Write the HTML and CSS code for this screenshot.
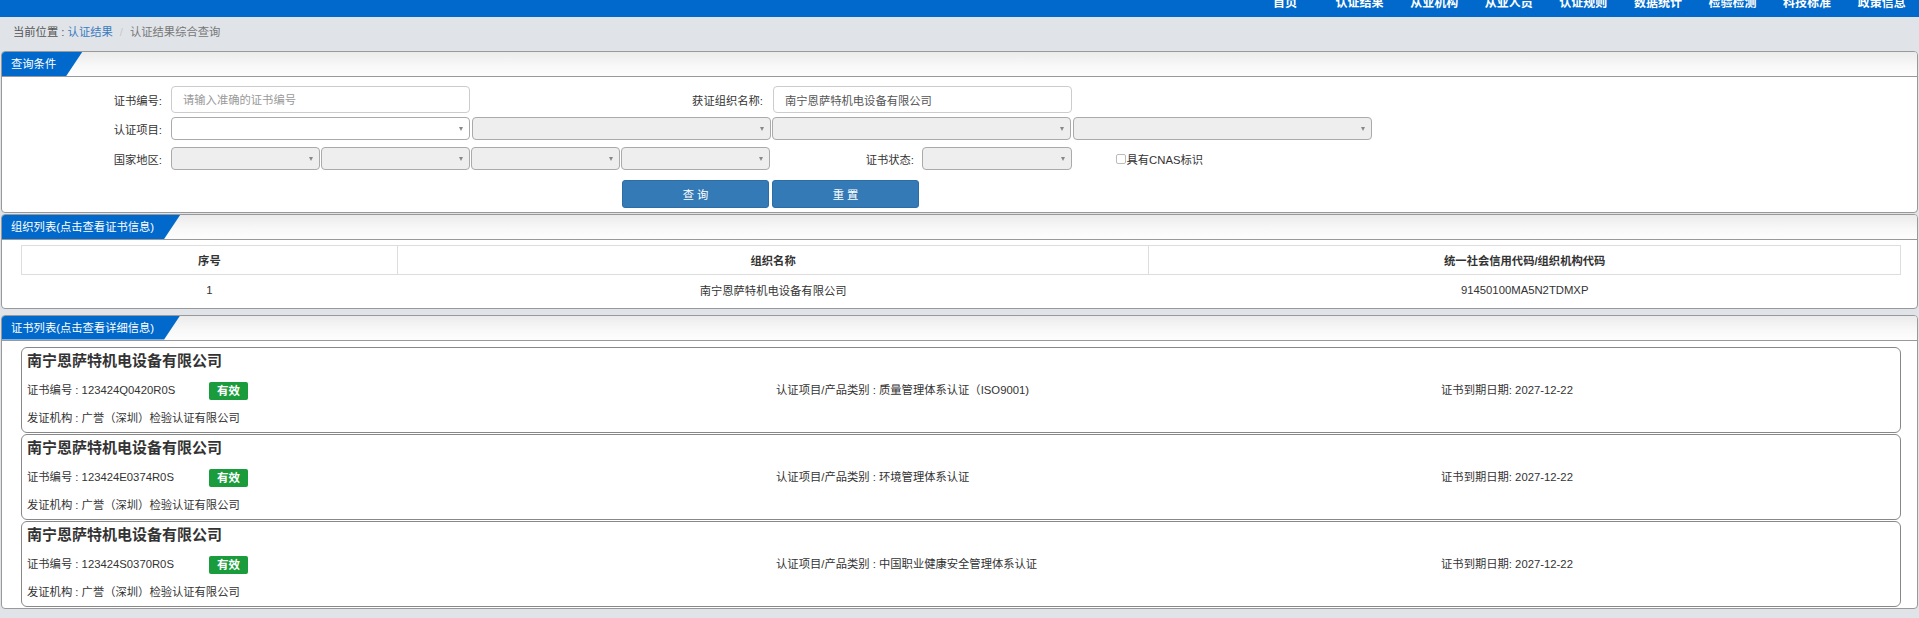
FILE: index.html
```html
<!DOCTYPE html>
<html lang="zh-CN">
<head>
<meta charset="utf-8">
<title>认证结果综合查询</title>
<link rel="stylesheet" href="styles.css">
</head>
<body>
<div class="topnav">
  <ul class="nav-list">
    <li>首页</li>
    <li>认证结果</li>
    <li>从业机构</li>
    <li>从业人员</li>
    <li>认证规则</li>
    <li>数据统计</li>
    <li>检验检测</li>
    <li>科技标准</li>
    <li>政策信息</li>
  </ul>
</div>

<div class="crumb">当前位置 : <a class="crumb-link">认证结果</a><span class="sep">/</span><span class="crumb-cur">认证结果综合查询</span></div>

<div class="panel panel-query">
  <div class="panel-head"><span class="tab">查询条件</span></div>
  <div class="query-body">
    <div class="frow">
      <label class="lbl">证书编号:</label>
      <input class="input" type="text" placeholder="请输入准确的证书编号">
      <label class="lbl lbl2">获证组织名称:</label>
      <input class="input" type="text" value="南宁恩萨特机电设备有限公司">
    </div>
    <div class="frow r2">
      <label class="lbl">认证项目:</label>
      <div class="sel w white"></div>
      <div class="sel w"></div>
      <div class="sel w"></div>
      <div class="sel w"></div>
    </div>
    <div class="frow r3">
      <label class="lbl">国家地区:</label>
      <div class="sel h"></div>
      <div class="sel h"></div>
      <div class="sel h"></div>
      <div class="sel h"></div>
      <label class="lbl lbl3">证书状态:</label>
      <div class="sel s"></div>
      <label class="chk"><span class="box"></span>具有CNAS标识</label>
    </div>
    <div class="frow btns">
      <button class="btn">查 询</button>
      <button class="btn">重 置</button>
    </div>
  </div>
</div>

<div class="panel panel-org">
  <div class="panel-head"><span class="tab">组织列表(点击查看证书信息)</span></div>
  <table class="org-table">
    <colgroup><col class="c1"><col class="c2"><col class="c3"></colgroup>
    <thead>
      <tr><th>序号</th><th>组织名称</th><th>统一社会信用代码/组织机构代码</th></tr>
    </thead>
    <tbody>
      <tr><td>1</td><td>南宁恩萨特机电设备有限公司</td><td>91450100MA5N2TDMXP</td></tr>
    </tbody>
  </table>
</div>

<div class="panel panel-cert">
  <div class="panel-head"><span class="tab">证书列表(点击查看详细信息)</span></div>
  <div class="cards">
    <div class="card">
      <div class="card-title">南宁恩萨特机电设备有限公司</div>
      <div class="card-row">
        <div><span class="cert-no">证书编号 : 123424Q0420R0S</span><span class="badge">有效</span></div>
        <div>认证项目/产品类别 : 质量管理体系认证（ISO9001)</div>
        <div>证书到期日期: 2027-12-22</div>
      </div>
      <div class="card-line">发证机构 : 广誉（深圳）检验认证有限公司</div>
    </div>
    <div class="card">
      <div class="card-title">南宁恩萨特机电设备有限公司</div>
      <div class="card-row">
        <div><span class="cert-no">证书编号 : 123424E0374R0S</span><span class="badge">有效</span></div>
        <div>认证项目/产品类别 : 环境管理体系认证</div>
        <div>证书到期日期: 2027-12-22</div>
      </div>
      <div class="card-line">发证机构 : 广誉（深圳）检验认证有限公司</div>
    </div>
    <div class="card">
      <div class="card-title">南宁恩萨特机电设备有限公司</div>
      <div class="card-row">
        <div><span class="cert-no">证书编号 : 123424S0370R0S</span><span class="badge">有效</span></div>
        <div>认证项目/产品类别 : 中国职业健康安全管理体系认证</div>
        <div>证书到期日期: 2027-12-22</div>
      </div>
      <div class="card-line">发证机构 : 广誉（深圳）检验认证有限公司</div>
    </div>
  </div>
</div>
</body>
</html>
```

FILE: styles.css
```css
* { box-sizing: border-box; }
html { overflow: hidden; }
html, body { margin: 0; padding: 0; }
body {
  background: #e0e4e9;
  font-family: "Liberation Sans", "Noto Sans CJK SC", sans-serif;
  font-size: 11.3px;
  color: #333;
}

/* top navigation (scrolled, only lower part visible) */
.topnav {
  height: 17px;
  background: #0069cb;
  overflow: hidden;
}
.nav-list {
  list-style: none;
  margin: -8px 0 0;
  padding: 0;
  display: flex;
  justify-content: flex-end;
}
.nav-list li {
  width: 74.6px;
  text-align: center;
  color: #fff;
  font-size: 12px;
  line-height: 22px;
  font-weight: bold;
}

/* breadcrumb */
.crumb {
  height: 34px;
  padding-left: 13px;
  line-height: 30px;
  color: #555;
}
.crumb-link { color: #3a7bbf; text-decoration: none; }
.sep { color: #c8c8c8; padding: 0 7px; }
.crumb-cur { color: #777; }

/* panels */
.panel {
  background: #fff;
  border: 1px solid #999;
  border-radius: 4px;
  margin: 0 1px;
}
.panel-org { margin-top: 1px; }
.panel-cert { margin-top: 6px; }
.panel-head {
  height: 25px;
  border-bottom: 1px solid #999;
  border-radius: 3px 3px 0 0;
  background: linear-gradient(to bottom, #ebebeb 0%, #f8f8f8 55%, #fdfdfd 100%);
}
.tab {
  display: inline-block;
  height: 24px;
  line-height: 24px;
  padding: 0 26px 0 9px;
  background: #0069cb;
  color: #fff;
  border-top-left-radius: 3px;
  clip-path: polygon(0 0, 100% 0, calc(100% - 16px) 100%, 0 100%);
}

/* query form */
.query-body { padding: 9px 0 4px; }
.frow { display: flex; align-items: center; }
.r2 { margin-top: 4px; }
.r3 { margin-top: 7px; }
.btns { margin-top: 10px; padding-left: 620px; gap: 3px; }
.lbl {
  flex: none;
  width: 169px;
  padding-right: 9px;
  text-align: right;
  color: #333;
}
.lbl2 { width: 303px; padding-right: 10px; }
.lbl3 { width: 151px; padding-right: 8px; }
.input {
  flex: none;
  width: 299px;
  height: 27px;
  border: 1px solid #ccc;
  border-radius: 4px;
  padding: 0 11px;
  font: inherit;
  color: #555;
  background: #fff;
  outline: none;
}
.input::placeholder { color: #999; }
.sel {
  flex: none;
  position: relative;
  height: 23px;
  border: 1px solid #aaa;
  border-radius: 4px;
  background: #eee;
  margin-right: 1.5px;
}
.sel.w { width: 299px; }
.sel.h { width: 148.5px; }
.sel.s { width: 150px; }
.sel.white { background: #fff; }
.sel::after {
  content: "";
  position: absolute;
  right: 6px;
  top: 50%;
  margin-top: -2px;
  border-left: 2.5px solid transparent;
  border-right: 2.5px solid transparent;
  border-top: 4px solid #888;
}
.chk {
  display: inline-flex;
  align-items: center;
  margin-left: 42px;
  color: #333;
}
.box {
  width: 10px;
  height: 10px;
  border: 1px solid #bbb;
  border-radius: 2px;
  background: #fff;
  margin-right: 1px;
}
.btn {
  width: 147px;
  height: 28px;
  background: #337ab7;
  border: 1px solid #2e6da4;
  border-radius: 3px;
  color: #fff;
  font: inherit;
  padding: 0;
}

/* org table */
.org-table {
  margin: 5px 16px 3px 19px;
  width: calc(100% - 35px);
  border-collapse: collapse;
}
.c1 { width: 20%; }
.c2 { width: 40%; }
.c3 { width: 40%; }
.org-table th {
  height: 29px;
  border: 1px solid #ddd;
  font-weight: bold;
  text-align: center;
  padding: 0;
}
.org-table td {
  height: 30px;
  text-align: center;
  padding: 0;
}

/* certificate cards */
.cards { padding: 6px 16px 1px 19px; }
.card {
  border: 1px solid #888;
  border-radius: 6px;
  padding: 1px 5px 0;
  margin-bottom: 1px;
}
.card:last-child { margin-bottom: 0; }
.card-title {
  font-size: 15px;
  font-weight: bold;
  line-height: 24px;
  color: #333;
}
.card-row {
  display: grid;
  grid-template-columns: 40.1% 35.6% 1fr;
  margin-top: 3px;
  line-height: 28px;
}
.cert-no { display: inline-block; width: 182px; }
.badge {
  display: inline-block;
  width: 39px;
  height: 18px;
  line-height: 18px;
  text-align: center;
  background: #1a9b3c;
  color: #fff;
  font-weight: bold;
  font-size: 11.5px;
  border-radius: 2px;
  vertical-align: middle;
}
.card-line { line-height: 28px; }
```
